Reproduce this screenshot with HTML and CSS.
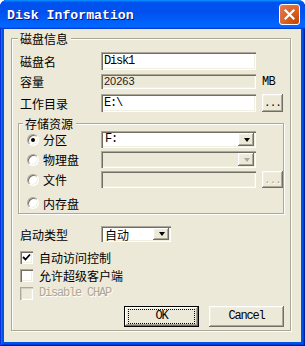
FILE: index.html
```html
<!DOCTYPE html>
<html>
	<head>
		<meta charset="UTF-8">
		<title>Disk Information</title>
		<link rel="stylesheet" href="styles.css">
	</head>
	<body>
		<div class="window">
			<div class="titlebar">
				<span class="title">Disk Information</span>
				<span class="close">
					<svg width="11" height="11" viewBox="0 0 11 11"><path d="M1.5 1.5 L9.5 9.5 M9.5 1.5 L1.5 9.5" stroke="#fff" stroke-width="2.2" stroke-linecap="square"/></svg>
				</span>
			</div>
			<div class="client">
				<div class="group outer">
					<div class="group_title">磁盘信息</div>
					<div class="row row_name">
						<span class="label">磁盘名</span>
						<div class="edit"><span class="mono">Disk1</span></div>
					</div>
					<div class="row row_size">
						<span class="label">容量</span>
						<div class="edit readonly">20263</div>
						<span class="unit">MB</span>
					</div>
					<div class="row row_dir">
						<span class="label">工作目录</span>
						<div class="edit"><span class="mono">E:\</span></div>
						<span class="btn browse">...</span>
					</div>
					<div class="group inner">
						<div class="group_title">存储资源</div>
						<div class="row radio_row first">
							<span class="opt"><span class="radio checked"></span>分区</span>
							<div class="combo"><span class="value mono">F:</span><span class="drop"><i class="arrow"></i></span></div>
						</div>
						<div class="row radio_row">
							<span class="opt"><span class="radio"></span>物理盘</span>
							<div class="combo disabled"><span class="value"></span><span class="drop"><i class="arrow"></i></span></div>
						</div>
						<div class="row radio_row">
							<span class="opt"><span class="radio"></span>文件</span>
							<div class="edit disabled"></div>
							<span class="btn browse disabled">...</span>
						</div>
						<div class="row radio_row last">
							<span class="opt"><span class="radio"></span>内存盘</span>
						</div>
					</div>
					<div class="row row_start">
						<span class="label">启动类型</span>
						<div class="combo small"><span class="value">自动</span><span class="drop"><i class="arrow"></i></span></div>
					</div>
					<div class="row check_row first">
						<span class="check checked">
							<svg width="9" height="9" viewBox="0 0 9 9"><path d="M1 4 L3.5 6.5 L8 1.5" stroke="#000" stroke-width="1.8" fill="none"/></svg>
						</span>
						<span>自动访问控制</span>
					</div>
					<div class="row check_row">
						<span class="check"></span>
						<span>允许超级客户端</span>
					</div>
					<div class="row check_row">
						<span class="check disabled"></span>
						<span class="mono gray">Disable CHAP</span>
					</div>
					<div class="buttons">
						<span class="btn push default"><span class="focus">OK</span></span>
						<span class="btn push">Cancel</span>
					</div>
				</div>
			</div>
		</div>
	</body>
</html>
```

FILE: styles.css
```css
html,body{margin: 0; padding: 0;}
body{
	background: #fff;
	font-family: "Noto Sans CJK SC", "Liberation Sans", sans-serif;
	font-size: 12px;
	line-height: 13px;
	color: #000;
}
.window{
	width: 305px;
	height: 346px;
	box-sizing: border-box;
	background: #0054e3;
	border-radius: 7px 7px 0 0;
	box-shadow: inset 1px 0 #0831d9, inset -1px -1px #001ea0, inset 2px 0 #166aee, inset -2px -2px #003bda;
	display: flex;
	flex-direction: column;
}
.titlebar{
	height: 29px;
	box-sizing: border-box;
	padding: 0 5px 0 7px;
	display: flex;
	align-items: center;
	justify-content: space-between;
	border-radius: 7px 7px 0 0;
	background: linear-gradient(180deg, #0997ff, #0053ee 8%, #0050ee 40%, #0066ff 88%, #0066ff 93%, #005bff 95%, #003dd7 96%, #003dd7);
}
.title{
	font-family: "Liberation Mono", monospace;
	font-weight: bold;
	font-size: 13.2px;
	color: #fff;
	text-shadow: 1px 1px #0f1089;
	padding-top: 1px;
}
.close{
	width: 21px;
	height: 21px;
	box-sizing: border-box;
	border: 1px solid #fff;
	border-radius: 3px;
	background: radial-gradient(circle at 85% 90%, #cc4600 0, #dc6527 55%, #e97b5b 100%);
	display: flex;
	align-items: center;
	justify-content: center;
}
.client{
	flex: 1;
	margin: 0 4px 4px 4px;
	background: #ece9d8;
	overflow: hidden;
}

/* group boxes */
.group{
	border: 1px solid #aca899;
	box-shadow: inset 1px 1px #fff, 1px 1px #fff;
}
.outer{
	margin: 9px 10px 0 7px;
	padding: 0 6px 3px 6px;
}
.inner{
	margin-top: 11px;
	padding-bottom: 2px;
}
.group_title{
	width: fit-content;
	margin-top: -7px;
	padding: 0 3px 0 2px;
	background: #ece9d8;
	height: 13px;
}
.inner .group_title{
	margin-left: 4px;
}

/* rows */
.row{
	display: flex;
	align-items: center;
	padding-left: 2px;
}
.label{
	width: 81px;
}
.row_name{
	margin-top: 7px;
	height: 18px;
}
.row_size{
	margin-top: 4px;
	height: 15px;
}
.row_dir{
	margin-top: 5px;
	height: 18px;
}
.edit{
	width: 155px;
	height: 100%;
	box-sizing: border-box;
	padding: 0 3px;
	background: #fff;
	box-shadow: inset 1px 1px #aca899, inset 2px 2px #716f64, inset -1px -1px #fff, inset -2px -2px #f1efe2;
	display: flex;
	align-items: center;
}
.edit.readonly{
	background: #ece9d8;
	font-family: "Liberation Sans", sans-serif;
	font-size: 11px;
	color: #222;
}
.edit.disabled{
	background: #ece9d8;
}
.mono{
	font-family: "Liberation Mono", monospace;
	font-size: 12px;
	letter-spacing: -1.2px;
}
.unit{
	margin-left: 6px;
	align-self: flex-end;
	font-family: "Liberation Mono", monospace;
	font-size: 12px;
	letter-spacing: -0.6px;
}
.btn{
	box-sizing: border-box;
	background: #ece9d8;
	box-shadow: inset -1px -1px #716f64, inset 1px 1px #fff, inset -2px -2px #aca899, inset 2px 2px #f1efe2;
	display: flex;
	align-items: center;
	justify-content: center;
	font-family: "Liberation Mono", monospace;
	font-size: 11px;
	letter-spacing: -1px;
}
.browse{
	width: 21px;
	height: 18px;
	margin-left: 6px;
	padding-top: 1px;
}
.btn.disabled{
	color: #aca899;
	text-shadow: 1px 1px #fff;
}

/* storage options */
.radio_row{
	padding-left: 8px;
	height: 17px;
	margin-top: 3px;
}
.radio_row.first{
	margin-top: 1px;
}
.radio_row.last{
	margin-top: 7px;
	height: 16px;
}
.radio_row .edit{
	height: 17px;
}
.radio_row .browse{
	height: 17px;
}
.opt{
	width: 74px;
	display: flex;
	align-items: center;
	gap: 4px;
}
.radio{
	width: 12px;
	height: 12px;
	box-sizing: border-box;
	border-radius: 50%;
	border: 1px solid;
	border-color: #aca899 #fff #fff #aca899;
	background: #fff;
	box-shadow: inset 1px 1px #716f64, inset -1px -1px #f1efe2;
	position: relative;
}
.radio.checked::after{
	content: "";
	position: absolute;
	left: 3px;
	top: 3px;
	width: 4px;
	height: 4px;
	border-radius: 50%;
	background: #000;
}
.combo{
	width: 155px;
	height: 17px;
	box-sizing: border-box;
	padding: 2px;
	background: #fff;
	box-shadow: inset 1px 1px #aca899, inset 2px 2px #716f64, inset -1px -1px #fff, inset -2px -2px #f1efe2;
	display: flex;
}
.combo.disabled{
	background: #ece9d8;
}
.combo .value{
	flex: 1;
	padding-left: 2px;
	display: flex;
	align-items: center;
}
.drop{
	width: 16px;
	background: #ece9d8;
	box-shadow: inset -1px -1px #716f64, inset 1px 1px #fff, inset -2px -2px #aca899, inset 2px 2px #f1efe2;
	display: flex;
	align-items: center;
	justify-content: center;
}
.arrow{
	width: 0;
	height: 0;
	border-left: 3.5px solid transparent;
	border-right: 3.5px solid transparent;
	border-top: 4px solid #000;
	margin-left: 1px;
}
.combo.disabled .arrow{
	border-top-color: #aca899;
}
.row_start{
	margin-top: 12px;
	height: 16px;
}
.combo.small{
	width: 70px;
	height: 16px;
}

/* checks */
.check_row{
	height: 13px;
	margin-top: 5px;
	gap: 6px;
}
.check_row.first{
	margin-top: 9px;
}
.check{
	width: 13px;
	height: 13px;
	box-sizing: border-box;
	background: #fff;
	box-shadow: inset 1px 1px #aca899, inset 2px 2px #716f64, inset -1px -1px #fff, inset -2px -2px #f1efe2;
	display: flex;
	align-items: center;
	justify-content: center;
}
.check.disabled{
	background: #ece9d8;
	box-shadow: inset 1px 1px #aca899, inset 2px 2px #d4d0c8, inset -1px -1px #fff, inset -2px -2px #f1efe2;
}
.gray{
	color: #aca899;
	text-shadow: 1px 1px #fff;
}

/* buttons */
.buttons{
	margin-top: 6px;
	display: flex;
	justify-content: flex-end;
	gap: 10px;
}
.push{
	width: 75px;
	height: 21px;
	font-size: 12px;
	letter-spacing: -1.2px;
}
.push.default{
	border: 1px solid #000;
	box-shadow: inset -1px -1px #716f64, inset 1px 1px #fff, inset -2px -2px #aca899, inset 2px 2px #f1efe2;
}
.focus{
	width: 67px;
	height: 15px;
	box-sizing: border-box;
	border: 1px dotted #000;
	display: flex;
	align-items: center;
	justify-content: center;
}
```
